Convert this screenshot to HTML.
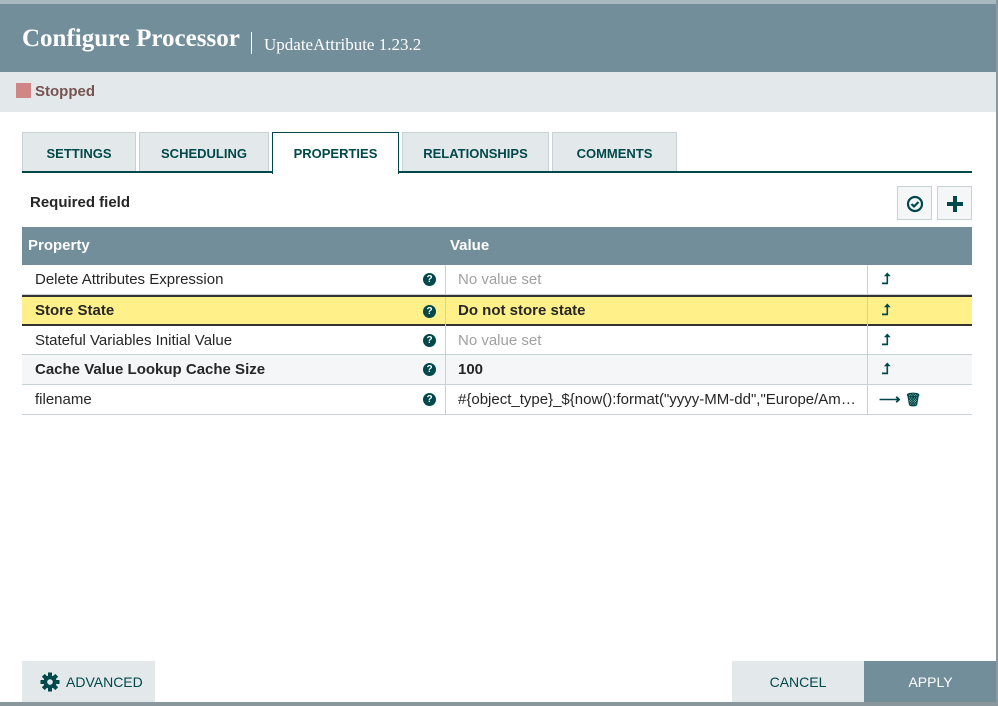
<!DOCTYPE html>
<html><head><style>
*{box-sizing:border-box;margin:0;padding:0}
body{width:998px;height:706px;background:#fff;font-family:"Liberation Sans",sans-serif;position:relative;overflow:hidden}
.hdr{position:absolute;left:0;top:0;width:998px;height:72px;background:#728e9b;border-top:4px solid #aab8bf}
.hdr .t{position:absolute;left:22px;top:21px;color:#fff;font-family:"Liberation Serif",serif;font-weight:bold;font-size:25px}
.hdr .sep{position:absolute;left:251px;top:28px;width:1px;height:22px;background:#fff}
.hdr .s{position:absolute;left:264px;top:31px;color:#fff;font-family:"Liberation Serif",serif;font-size:17px}
.st{position:absolute;left:0;top:72px;width:998px;height:40px;background:#e3e8eb}
.st .sq{position:absolute;left:16px;top:11px;width:15px;height:15px;background:#d18686}
.st .l{position:absolute;left:35px;top:11px;color:#775351;font-weight:bold;font-size:15px}
.tab{position:absolute;top:132px;height:40px;background:#e3e8eb;border:1px solid #c7d2d7;border-bottom:none;color:#004849;font-size:13px;font-weight:bold;text-align:center;line-height:42px}
.tabline{position:absolute;left:22px;top:171px;width:950px;height:2px;background:#004849}
.req{position:absolute;left:30px;top:194px;font-size:15px;font-weight:bold;color:#262626}
.ib{position:absolute;top:186px;width:35px;height:34px;border:1px solid #c7d2d7;background:#f4f6f7}
.th{position:absolute;left:22px;top:227px;width:950px;height:38px;background:#728e9b;color:#fff;font-weight:bold;font-size:15px}
.row{position:absolute;left:22px;width:950px;height:30px;border-bottom:1px solid #c7d2d7;font-size:15px;color:#262626}
.row div{position:absolute;top:6px}
.vl{position:absolute;top:0;width:1px;height:30px;background:#c7d2d7}
.q{position:absolute;left:401px;top:8px!important;width:13px;height:13px;border-radius:50%;background:#004849;color:#fff;font-size:10px;font-weight:bold;text-align:center;line-height:13px}
.ic{color:#004849;font-weight:bold}
.btn{position:absolute;top:661px;height:41px;font-size:14px;text-align:center;line-height:42px}
</style></head><body>
<div class="hdr"><div class="t">Configure Processor</div><div class="sep"></div><div class="s">UpdateAttribute 1.23.2</div></div>
<div class="st"><div class="sq"></div><div class="l">Stopped</div></div>
<div class="tab" style="left:22px;width:114px">SETTINGS</div>
<div class="tab" style="left:139px;width:130px">SCHEDULING</div>
<div class="tab" style="left:272px;width:127px;background:#fff;border:1px solid #004849;border-bottom:none;height:42px;z-index:2">PROPERTIES</div>
<div class="tab" style="left:402px;width:147px">RELATIONSHIPS</div>
<div class="tab" style="left:552px;width:125px">COMMENTS</div>
<div class="tabline"></div>
<div class="req">Required field</div>
<div class="ib" style="left:897px"><svg width="35" height="34" viewBox="0 0 35 34"><circle cx="17" cy="17" r="7" fill="none" stroke="#004849" stroke-width="2.2"/><path d="M13.5 17l2.5 2.5 4.5-4.5" fill="none" stroke="#004849" stroke-width="2.2"/></svg></div>
<div class="ib" style="left:937px"><svg width="35" height="34" viewBox="0 0 35 34"><path d="M17 9v16M9 17h16" stroke="#004849" stroke-width="4"/></svg></div>
<div class="th"><div style="position:absolute;left:6px;top:10px">Property</div><div style="position:absolute;left:428px;top:10px">Value</div></div>
<div class="row" style="top:265px"><div style="left:13px">Delete Attributes Expression</div><div class="q">?</div><span class="vl" style="left:423px"></span><div style="left:436px;color:#a0a0a0">No value set</div><span class="vl" style="left:845px"></span><div class="ic" style="left:860px">⮥</div></div>
<div class="row" style="top:295px;background:#fff08a;border-top:2px solid #333;border-bottom:2px solid #333;height:31px"><div style="left:13px;font-weight:bold;top:5px">Store State</div><div class="q">?</div><span class="vl" style="left:423px"></span><div style="left:436px;font-weight:bold;top:5px">Do not store state</div><span class="vl" style="left:845px"></span><div class="ic" style="left:860px;top:5px">⮥</div></div>
<div class="row" style="top:326px;height:29px"><div style="left:13px">Stateful Variables Initial Value</div><div class="q">?</div><span class="vl" style="left:423px"></span><div style="left:436px;color:#a0a0a0">No value set</div><span class="vl" style="left:845px"></span><div class="ic" style="left:860px">⮥</div></div>
<div class="row" style="top:355px;background:#f4f6f7"><div style="left:13px;font-weight:bold">Cache Value Lookup Cache Size</div><div class="q">?</div><span class="vl" style="left:423px"></span><div style="left:436px;font-weight:bold">100</div><span class="vl" style="left:845px"></span><div class="ic" style="left:860px">⮥</div></div>
<div class="row" style="top:385px"><div style="left:13px">filename</div><div class="q">?</div><span class="vl" style="left:423px"></span><div style="left:436px;width:405px;white-space:nowrap;overflow:hidden;text-overflow:ellipsis">#{object_type}_${now():format("yyyy-MM-dd","Europe/Amsterdam")}</div><span class="vl" style="left:845px"></span><div class="ic" style="left:857px;top:5px">⟶ <span style="font-size:13px">🗑</span></div></div>
<div class="btn" style="left:22px;width:133px;background:#e3e8eb;color:#004849;text-align:left;padding-left:44px">ADVANCED</div>
<svg style="position:absolute;left:40px;top:672px" width="20" height="20" viewBox="0 0 20 20"><g fill="#004849"><circle cx="10" cy="10" r="6.5"/><rect x="8" y="0.5" width="4" height="19"/><rect x="0.5" y="8" width="19" height="4"/><rect x="8" y="0.5" width="4" height="19" transform="rotate(45 10 10)"/><rect x="8" y="0.5" width="4" height="19" transform="rotate(-45 10 10)"/></g><circle cx="10" cy="10" r="2.8" fill="#e3e8eb"/></svg>
<div class="btn" style="left:732px;width:132px;background:#e3e8eb;color:#004849">CANCEL</div>
<div class="btn" style="left:864px;width:133px;background:#728e9b;color:#fff">APPLY</div>
<div style="position:absolute;left:0;top:702px;width:998px;height:4px;background:#8a979d"></div>
<div style="position:absolute;left:996px;top:0;width:2px;height:706px;background:#8a979d"></div>
</body></html>
